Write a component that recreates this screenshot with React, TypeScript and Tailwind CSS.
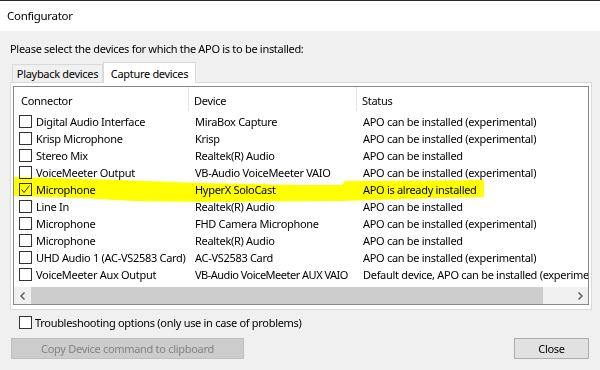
import React from "react"

type Row = {
  connector: string
  device: string
  status: string
  checked?: boolean
}

const rows: Row[] = [
  { connector: "Digital Audio Interface", device: "MiraBox Capture", status: "APO can be installed (experimental)" },
  { connector: "Krisp Microphone", device: "Krisp", status: "APO can be installed (experimental)" },
  { connector: "Stereo Mix", device: "Realtek(R) Audio", status: "APO can be installed" },
  { connector: "VoiceMeeter Output", device: "VB-Audio VoiceMeeter VAIO", status: "APO can be installed (experimental)" },
  { connector: "Microphone", device: "HyperX SoloCast", status: "APO is already installed", checked: true },
  { connector: "Line In", device: "Realtek(R) Audio", status: "APO can be installed" },
  { connector: "Microphone", device: "FHD Camera Microphone", status: "APO can be installed (experimental)" },
  { connector: "Microphone", device: "Realtek(R) Audio", status: "APO can be installed" },
  { connector: "UHD Audio 1 (AC-VS2583 Card)", device: "AC-VS2583 Card", status: "APO can be installed (experimental)" },
  { connector: "VoiceMeeter Aux Output", device: "VB-Audio VoiceMeeter AUX VAIO", status: "Default device, APO can be installed (experimental)" },
]

function CheckBox({ checked }: { checked?: boolean }) {
  return (
    <div className="w-[13px] h-[13px] shrink-0 border border-[#333333] bg-white flex items-center justify-center">
      {checked && (
        <svg width="11" height="11" viewBox="0 0 11 11">
          <path d="M1.5 5.5 L4 8.5 L9.5 1.5" fill="none" stroke="#333333" strokeWidth="1" />
        </svg>
      )}
    </div>
  )
}

export default function App() {
  return (
    <div
      className="relative w-[600px] h-[370px] overflow-hidden bg-[#f0f0f0] text-black text-[11px] leading-[15px] tracking-[-0.3px]"
      style={{ fontFamily: '"Noto Sans", sans-serif' }}
    >
      {/* title bar */}
      <div className="h-[31px] bg-white border-t border-[#2b2b2b] flex items-center pl-[7px] pb-[1px] text-[11.5px]">
        Configurator
      </div>

      <div className="px-[10px]">
        <div className="mt-[10px] h-[15px]">Please select the devices for which the APO is to be installed:</div>

        {/* tabs */}
        <div className="mt-[6px] flex items-end h-[20px] pl-[2px] relative z-10">
          <div className="w-[91px] h-[18px] flex items-center justify-center border border-b-0 border-[#d9d9d9] bg-[#f0f0f0]">
            Playback devices
          </div>
          <div className="w-[93px] h-[21px] -mb-px flex items-center justify-center border border-b-0 border-[#d9d9d9] bg-white">
            Capture devices
          </div>
        </div>

        {/* tab panel */}
        <div className="w-[582px] h-[228px] border border-[#d9d9d9] bg-white pt-[3px] pb-[4px] pl-[2px] pr-[2px]">
          <div className="h-full border border-[#828790] bg-white flex flex-col overflow-hidden">
            <div className="h-[26px] flex shrink-0">
              <div className="w-[175px] shrink-0 border-r border-[#e5e5e5] pl-[7px] pt-[6px] h-[24px]">Connector</div>
              <div className="w-[168px] shrink-0 border-r border-[#e5e5e5] pl-[5px] pt-[6px] h-[24px]">Device</div>
              <div className="pl-[5px] pt-[6px]">Status</div>
            </div>
            <div className="flex-1">
              {rows.map((r, i) => (
                <div key={i} className="h-[17px] flex items-center whitespace-nowrap">
                  <div className="w-[176px] shrink-0 flex items-center pl-[5px] gap-[4px] overflow-hidden">
                    <CheckBox checked={r.checked} />
                    <span>{r.connector}</span>
                  </div>
                  <div
                    className={
                      r.device.length > 26
                        ? "w-[168px] shrink-0 pl-[5px] overflow-hidden tracking-[-0.5px]"
                        : "w-[168px] shrink-0 pl-[5px] overflow-hidden"
                    }
                  >
                    {r.device}
                  </div>
                  <div className="pl-[5px] overflow-hidden">{r.status}</div>
                </div>
              ))}
            </div>
            {/* horizontal scrollbar */}
            <div className="h-[17px] shrink-0 bg-[#f0f0f0] flex items-center">
              <div className="w-[17px] h-full flex items-center justify-center">
                <svg width="6" height="8" viewBox="0 0 6 8">
                  <path d="M4.5 0.5 L1 4 L4.5 7.5" fill="none" stroke="#606060" strokeWidth="1.5" />
                </svg>
              </div>
              <div className="w-[512px] h-full bg-[#cdcdcd]" />
              <div className="flex-1" />
              <div className="w-[17px] h-full flex items-center justify-center">
                <svg width="6" height="8" viewBox="0 0 6 8">
                  <path d="M1.5 0.5 L5 4 L1.5 7.5" fill="none" stroke="#606060" strokeWidth="1.5" />
                </svg>
              </div>
            </div>
          </div>
        </div>

        {/* troubleshooting */}
        <div className="mt-[6px] pl-[9px] flex items-center gap-[3px] h-[13px]">
          <CheckBox />
          <span>Troubleshooting options (only use in case of problems)</span>
        </div>

        {/* buttons */}
        <div className="mt-[9px] flex justify-between pl-[1px] pr-[1px]">
          <div className="w-[233px] h-[21px] border border-[#bfbfbf] bg-[#cccccc] text-[#838383] flex items-center justify-center">
            Copy Device command to clipboard
          </div>
          <div className="w-[75px] h-[21px] border border-[#adadad] bg-[#e1e1e1] flex items-center justify-center">
            Close
          </div>
        </div>
      </div>

      {/* yellow highlighter stroke */}
      <svg
        className="absolute left-0 top-0 pointer-events-none mix-blend-multiply"
        width="600"
        height="370"
        viewBox="0 0 600 370"
      >
        <polygon
          points="14,177 120,180 200,183 300,185 342,185 345,181 484,180 484,197 440,198 343,201 200,202 133,201 80,198 14,196"
          fill="#ffff00"
        />
      </svg>
    </div>
  )
}
